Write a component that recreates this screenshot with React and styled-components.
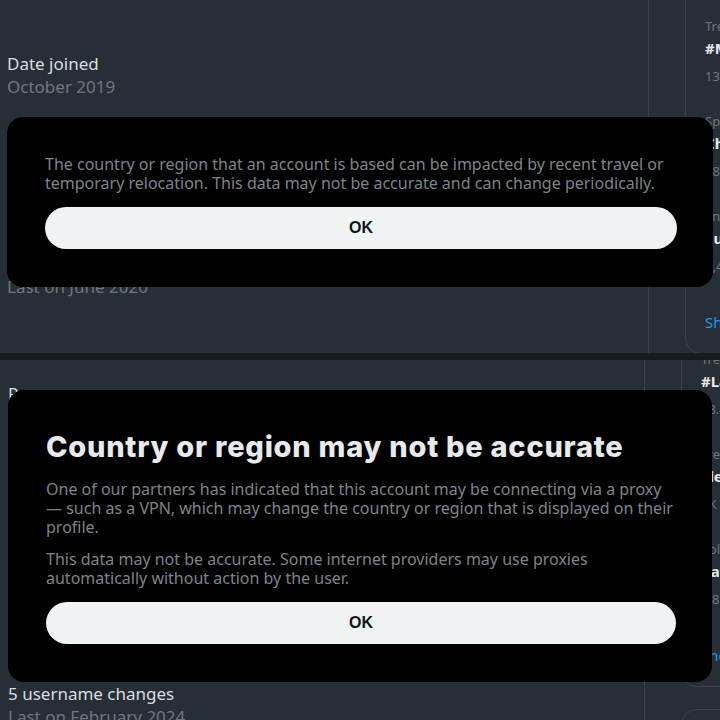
import React from 'react';
import styled, { createGlobalStyle } from 'styled-components';

// --- Mock Data ---
const topRows = [
  { title: 'Date joined', sub: 'October 2019' },
  { title: 'Account based in', sub: 'United States' },
  { title: '1 username change', sub: 'Last on June 2020' },
];

const bottomRows = [
  { title: 'Proxy usage', sub: 'Connected via VPN' },
  { title: 'Date joined', sub: 'March 2016' },
  { title: 'Account based in', sub: 'Europe' },
  { title: '5 username changes', sub: 'Last on February 2024' },
];

const topTrends = [
  { cat: 'Trending in United States', name: '#MondayMotivation', count: '13.2K posts' },
  { cat: 'Sports · Trending', name: 'Champions League', count: '38.1K posts' },
  { cat: 'Entertainment · Trending', name: 'Eurovision', count: '3,412 posts' },
];

const bottomTrends = [
  { cat: 'Trending in Germany', name: '#LateNightShow', count: '38.4K posts' },
  { cat: 'Trending', name: 'Election Day', count: '3K posts' },
  { cat: 'Politics · Trending', name: 'nationwide', count: '3.8K posts' },
];

// --- Styled Components ---
const GlobalStyle = createGlobalStyle`
  html, body {
    margin: 0;
    padding: 0;
    background: #272e35;
  }
  body {
    font-family: "Noto Sans", "Open Sans", sans-serif;
  }
`;

const Page = styled.div`
  width: 720px;
  height: 720px;
  overflow: hidden;
  display: flex;
  flex-direction: column;
  background: #272e35;
`;

const Panel = styled.div`
  position: relative;
  height: ${p => p.$height}px;
  flex-shrink: 0;
  display: flex;
  overflow: hidden;
`;

const Separator = styled.div`
  height: 7px;
  flex-shrink: 0;
  background: #171c20;
`;

const MainColumn = styled.div`
  width: ${p => p.$width}px;
  flex-shrink: 0;
  border-right: 1px solid #3a424a;
  box-sizing: border-box;
  padding: ${p => p.$top}px 0 0 ${p => p.$left}px;
  display: flex;
  flex-direction: column;
  gap: 54px;
`;

const InfoRow = styled.div`
  display: flex;
  flex-direction: column;
`;

const InfoTitle = styled.div`
  font-size: 17px;
  line-height: 23px;
  color: #d9dde0;
`;

const InfoSub = styled.div`
  font-size: 17px;
  line-height: 23px;
  color: #6f777e;
`;

const Sidebar = styled.div`
  flex: 1;
  padding-left: 36px;
  margin-top: ${p => p.$shift}px;
`;

const TrendCard = styled.div`
  border: 1px solid #3a424a;
  border-radius: 16px;
  padding: ${p => p.$padTop}px 0 21px 0;
  width: 340px;
`;

const TrendItem = styled.div`
  padding: 17px 19px 12px;
  display: flex;
  flex-direction: column;
`;

const TrendCat = styled.div`
  font-size: 13px;
  line-height: 16px;
  color: #6f777e;
  white-space: nowrap;
`;

const TrendName = styled.div`
  font-size: 15px;
  line-height: 20px;
  margin-top: 4px;
  font-weight: 700;
  color: #e7e9ea;
  white-space: nowrap;
`;

const TrendCount = styled.div`
  font-size: 13px;
  line-height: 16px;
  margin-top: 10px;
  color: #6f777e;
  white-space: nowrap;
`;

const ShowMore = styled.div`
  padding: 26px 19px 0;
  font-size: 15px;
  line-height: 20px;
  color: #1d9bf0;
`;

const NextCard = styled.div`
  margin-top: 22px;
  height: 60px;
  width: 340px;
  border: 1px solid #3a424a;
  border-radius: 16px;
`;

const Modal = styled.div`
  position: absolute;
  left: ${p => p.$left}px;
  top: ${p => p.$top}px;
  width: ${p => p.$width}px;
  box-sizing: border-box;
  background: #000;
  border-radius: 16px;
  padding: ${p => p.$padTop}px 36px 38px 38px;
  display: flex;
  flex-direction: column;
`;

const ModalTitle = styled.h2`
  margin: 0 0 15px;
  font-family: "Inter", "Noto Sans", sans-serif;
  font-size: 29px;
  line-height: 36px;
  font-weight: 800;
  color: #e7e9ea;
  letter-spacing: 0.75px;
`;

const ModalText = styled.p`
  margin: 0 0 13px;
  font-size: 16px;
  line-height: 19px;
  color: #7e848a;
`;

const OkButton = styled.button`
  margin-top: 1px;
  height: 42px;
  border: none;
  border-radius: 21px;
  background: #eff3f4;
  color: #0f1419;
  font-family: "Liberation Sans", Arial, sans-serif;
  font-size: 16px;
  font-weight: 700;
  cursor: pointer;
`;

// --- Parts ---
const Trends = ({ items, shift, padTop, next }) => (
  <Sidebar $shift={shift}>
    <TrendCard $padTop={padTop}>
      {items.map(t => (
        <TrendItem key={t.name}>
          <TrendCat>{t.cat}</TrendCat>
          <TrendName>{t.name}</TrendName>
          <TrendCount>{t.count}</TrendCount>
        </TrendItem>
      ))}
      <ShowMore>Show more</ShowMore>
    </TrendCard>
    {next && <NextCard />}
  </Sidebar>
);

const Rows = ({ rows, width, top, left }) => (
  <MainColumn $width={width} $top={top} $left={left}>
    {rows.map(r => (
      <InfoRow key={r.title}>
        <InfoTitle>{r.title}</InfoTitle>
        <InfoSub>{r.sub}</InfoSub>
      </InfoRow>
    ))}
  </MainColumn>
);

// --- Main App Component ---
const App = () => {
  return (
    <>
      <GlobalStyle />
      <Page>
        <Panel $height={353}>
          <Rows rows={topRows} width={649} top={52} left={7} />
          <Trends items={topTrends} shift={-20} padTop={20} />
          <Modal $left={7} $top={117} $width={706} $padTop={38}>
            <ModalText>
              The country or region that an account is based can be impacted by recent travel or
              temporary relocation. This data may not be accurate and can change periodically.
            </ModalText>
            <OkButton>OK</OkButton>
          </Modal>
        </Panel>
        <Separator />
        <Panel $height={360}>
          <Rows rows={bottomRows} width={645} top={22} left={8} />
          <Trends items={bottomTrends} shift={-27} padTop={0} next />
          <Modal $left={8} $top={30} $width={704} $padTop={39}>
            <ModalTitle>Country or region may not be accurate</ModalTitle>
            <ModalText>
              One of our partners has indicated that this account may be connecting via a proxy
              — such as a VPN, which may change the country or region that is displayed on their
              profile.
            </ModalText>
            <ModalText>
              This data may not be accurate. Some internet providers may use proxies
              automatically without action by the user.
            </ModalText>
            <OkButton>OK</OkButton>
          </Modal>
        </Panel>
      </Page>
    </>
  );
};

export default App;
